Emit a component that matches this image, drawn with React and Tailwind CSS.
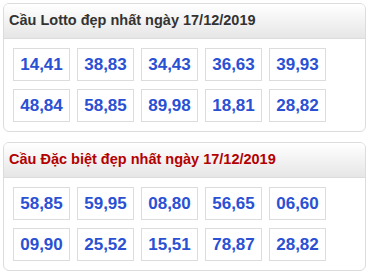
import React from "react";

const lotto = ["14,41", "38,83", "34,43", "36,63", "39,93", "48,84", "58,85", "89,98", "18,81", "28,82"];
const dacBiet = ["58,85", "59,95", "08,80", "56,65", "06,60", "09,90", "25,52", "15,51", "78,87", "28,82"];

function Panel({ title, titleClass, items }) {
  return (
    <div className="w-[363px] rounded-md border border-[#dcdcdc] overflow-hidden bg-white">
      {/* tieu de */}
      <div className="h-[35px] flex items-center pl-[5px] bg-gradient-to-b from-white to-[#e6e6e6] border-b border-[#dcdcdc]">
        <span className={"text-[14.5px] font-bold " + titleClass}>{title}</span>
      </div>
      <div className="grid grid-cols-[repeat(5,57px)] gap-x-[7px] gap-y-[8px] pl-[9px] pt-[9px] pb-[9px]">
        {items.map((n, i) => (
          <div
            key={i}
            className="h-[33px] flex items-center justify-center border border-[#dcdcdc] text-[17px] font-bold text-[#2a50d4]"
          >
            {n}
          </div>
        ))}
      </div>
    </div>
  );
}

export default function App() {
  return (
    <div className="w-[372px] h-[274px] bg-white pl-[3px] pt-[3px] flex flex-col gap-[10px] font-['Liberation_Sans',Arial,sans-serif]">
      <Panel title="Cầu Lotto đẹp nhất ngày 17/12/2019" titleClass="text-[#333333]" items={lotto} />
      <Panel title="Cầu Đặc biệt đẹp nhất ngày 17/12/2019" titleClass="text-[#b30000]" items={dacBiet} />
    </div>
  );
}
